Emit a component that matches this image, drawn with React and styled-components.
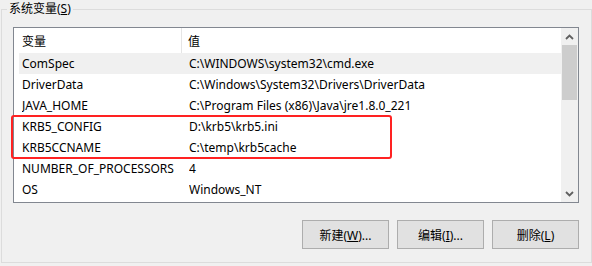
import React from "react";
import styled, { createGlobalStyle } from "styled-components";

const Global = createGlobalStyle`
  html, body { margin: 0; padding: 0; background: #f0f0f0; }
  body {
    font-family: "Noto Sans", "Noto Sans CJK SC", sans-serif;
    font-size: 12px;
    color: #000;
  }
`;

const Page = styled.div`
  width: 592px;
  height: 266px;
  box-sizing: border-box;
  padding: 0 0 0 1px;
  overflow: hidden;
`;

const Group = styled.fieldset`
  box-sizing: border-box;
  width: 591px;
  height: 263px;
  margin: 0;
  padding: 9px 12px 13px 11px;
  border: 1px solid #dcdcdc;
  display: flex;
  flex-direction: column;
  min-width: 0;
`;

const Legend = styled.legend`
  margin-left: -6px;
  padding: 0 2px;
  font-size: 12px;
  line-height: 18px;
  height: 18px;
`;

const Accel = styled.span`
  text-decoration: underline;
  text-underline-offset: 1px;
`;

const ListBox = styled.div`
  box-sizing: border-box;
  height: 176px;
  border: 1px solid #828790;
  background: #fff;
  display: flex;
`;

const Content = styled.div`
  flex: 1;
  display: flex;
  flex-direction: column;
  min-width: 0;
`;

const Header = styled.div`
  display: grid;
  grid-template-columns: 168px 1fr;
  height: 25px;
  align-items: stretch;
`;

const HeadCell = styled.div`
  display: flex;
  align-items: center;
  padding-left: ${(p) => p.$pad}px;
  border-right: ${(p) => (p.$divider ? "1px solid #e5e5e5" : "none")};
`;

const Row = styled.div`
  display: grid;
  grid-template-columns: 167px 1fr;
  height: 21px;
  align-items: center;
  margin-left: 5px;
  padding-left: 3px;
  background: ${(p) => (p.$hover ? "#f0f0f0" : "transparent")};
  white-space: nowrap;
`;

const Cell = styled.div`
  overflow: hidden;
`;

const Highlight = styled.div`
  position: relative;
  &::after {
    content: "";
    position: absolute;
    left: -3px;
    top: -1px;
    width: 381px;
    height: 44px;
    border: 2.5px solid #ff2222;
    border-radius: 3px;
    box-sizing: border-box;
    pointer-events: none;
  }
`;

const ScrollBar = styled.div`
  width: 17px;
  background: #f0f0f0;
  display: flex;
  flex-direction: column;
  align-items: center;
`;

const Arrow = styled.div`
  height: 17px;
  width: 17px;
  display: flex;
  align-items: center;
  justify-content: center;
`;

const Track = styled.div`
  flex: 1;
  width: 100%;
  padding: 0 1px;
  box-sizing: border-box;
`;

const Thumb = styled.div`
  height: 55px;
  background: #cdcdcd;
`;

const Buttons = styled.div`
  display: flex;
  justify-content: flex-end;
  gap: 8px;
  margin-top: 17px;
`;

const Button = styled.button`
  box-sizing: border-box;
  width: 87px;
  height: 29px;
  background: #e1e1e1;
  border: 1px solid #adadad;
  font-family: inherit;
  font-size: 12px;
  color: #000;
  padding: 0;
  margin: 0;
`;

const Chevron = ({ down }) => (
  <svg width="9" height="6" viewBox="0 0 9 6">
    <polyline
      points={down ? "1,1 4.5,4.5 8,1" : "1,5 4.5,1.5 8,5"}
      fill="none"
      stroke="#606060"
      strokeWidth="1.8"
    />
  </svg>
);

const rows = [
  ["ComSpec", "C:\\WINDOWS\\system32\\cmd.exe"],
  ["DriverData", "C:\\Windows\\System32\\Drivers\\DriverData"],
  ["JAVA_HOME", "C:\\Program Files (x86)\\Java\\jre1.8.0_221"],
  ["KRB5_CONFIG", "D:\\krb5\\krb5.ini"],
  ["KRB5CCNAME", "C:\\temp\\krb5cache"],
  ["NUMBER_OF_PROCESSORS", "4"],
  ["OS", "Windows_NT"],
];

export default function App() {
  const renderRow = ([k, v], i) => (
    <Row key={k} $hover={i === 0}>
      <Cell>{k}</Cell>
      <Cell>{v}</Cell>
    </Row>
  );
  return (
    <Page>
      <Global />
      <Group>
        <Legend>
          系统变量(<Accel>S</Accel>)
        </Legend>
        <ListBox>
          <Content>
            <Header>
              <HeadCell $pad={8} $divider>变量</HeadCell>
              <HeadCell $pad={6}>值</HeadCell>
            </Header>
            {rows.slice(0, 3).map((r, i) => renderRow(r, i))}
            <Highlight>
              {rows.slice(3, 5).map((r, i) => renderRow(r, i + 3))}
            </Highlight>
            {rows.slice(5).map((r, i) => renderRow(r, i + 5))}
          </Content>
          <ScrollBar>
            <Arrow>
              <Chevron />
            </Arrow>
            <Track>
              <Thumb />
            </Track>
            <Arrow>
              <Chevron down />
            </Arrow>
          </ScrollBar>
        </ListBox>
        <Buttons>
          <Button>
            新建(<Accel>W</Accel>)...
          </Button>
          <Button>
            编辑(<Accel>I</Accel>)...
          </Button>
          <Button>
            删除(<Accel>L</Accel>)
          </Button>
        </Buttons>
      </Group>
    </Page>
  );
}
